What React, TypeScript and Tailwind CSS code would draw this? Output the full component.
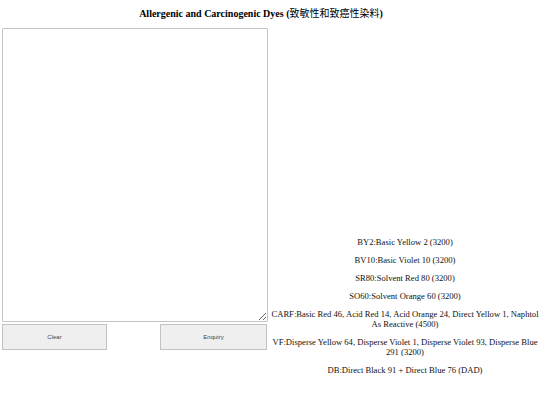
const dyes: string[] = [
  'BY2:Basic Yellow 2 (3200)',
  'BV10:Basic Violet 10 (3200)',
  'SR80:Solvent Red 80 (3200)',
  'SO60:Solvent Orange 60 (3200)',
  'CARF:Basic Red 46, Acid Red 14, Acid Orange 24, Direct Yellow 1, Naphtol As Reactive (4500)',
  'VF:Disperse Yellow 64, Disperse Violet 1, Disperse Violet 93, Disperse Blue 291 (3200)',
  'DB:Direct Black 91 + Direct Blue 76 (DAD)',
]

export default function App() {
  return (
    <div className="w-[540px] h-[405px] bg-white text-black font-['Liberation_Serif','Noto_Sans_CJK_SC',serif]">
      <h1 className="pt-[8px] pr-[18px] h-[28px] text-center text-[10px] leading-[11px] font-bold">
        Allergenic and Carcinogenic Dyes (<span className="font-normal">致敏性和致癌性染料</span>)
      </h1>
      <div className="flex">
        <div className="w-[270px] pl-[2px] flex flex-col">
          <textarea className="w-[266px] h-[294px] border border-[#c4c4c4] rounded-[1px] bg-white resize-y outline-none block" />
          <div className="mt-[2px] flex justify-between w-[265px]">
            <button className="w-[105px] h-[26px] bg-[#efefef] border border-[#c2c2c2] text-[6px] text-[#444] font-['Liberation_Sans',sans-serif]">
              Clear
            </button>
            <button className="w-[107px] h-[26px] bg-[#efefef] border border-[#c2c2c2] text-[6px] text-[#444] font-['Liberation_Sans',sans-serif]">
              Enquiry
            </button>
          </div>
        </div>
        <div className="flex-1 pt-[209px] flex flex-col gap-[8px] text-[8.6px] leading-[10px] text-center text-[#111]">
          {dyes.map((d) => (
            <p key={d}>{d}</p>
          ))}
        </div>
      </div>
    </div>
  )
}
